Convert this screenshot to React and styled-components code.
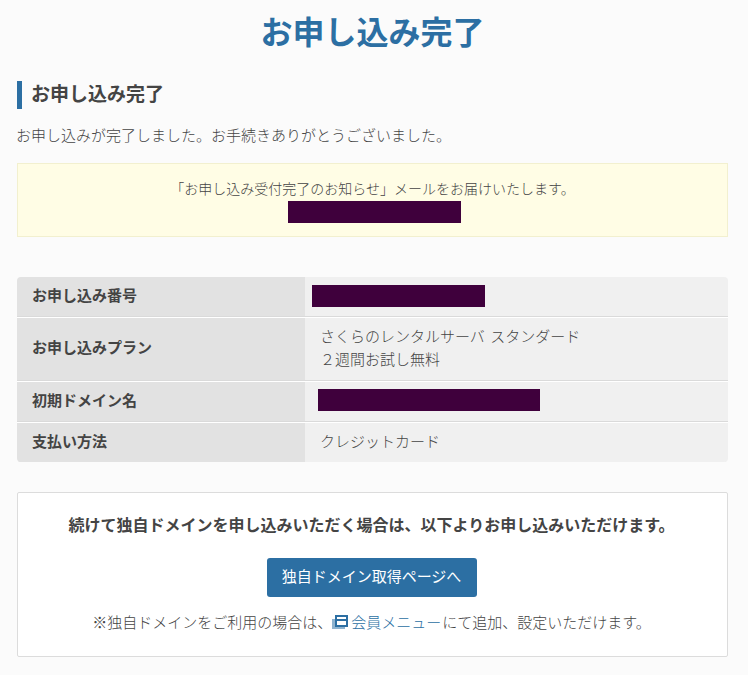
import styled, { createGlobalStyle } from "styled-components";

const GlobalStyle = createGlobalStyle`
  * {
    box-sizing: border-box;
  }
  body {
    margin: 0;
    background-color: #fbfbfb;
    color: #444;
    font-family: "Noto Sans CJK JP", sans-serif;
    font-size: 15px;
    font-weight: 300;
    line-height: 23px;
  }
  h1, h2, p, dl, dt, dd {
    margin: 0;
  }
`;

const StPage = styled.main`
  display: flex;
  flex-direction: column;
  width: 748px;
  height: 675px;
  padding: 6px 20px 0 17px;
  overflow: hidden;
`;

const StTitle = styled.h1`
  color: #2c6fa3;
  font-size: 32px;
  font-weight: bold;
  line-height: 48px;
  text-align: center;
`;

const StHeading = styled.h2`
  height: 28px;
  margin-top: 27px;
  padding-left: 9px;
  border-left: 5px solid #2c6fa3;
  color: #444;
  font-size: 19px;
  font-weight: bold;
  line-height: 24px;
`;

const StIntro = styled.p`
  margin: 14px 0 0 -1px;
`;

const StNotice = styled.section`
  display: flex;
  flex-direction: column;
  align-items: center;
  height: 74px;
  margin-top: 17px;
  padding-top: 13px;
  border: 1px solid #f2f0cf;
  background-color: #fffde5;
  font-size: 14px;
`;

const StNoticeText = styled.p`
  height: 24px;
`;

const StMask = styled.span`
  display: block;
  width: ${(props) => props.$width}px;
  height: 22px;
  margin-left: ${(props) => props.$shift ?? 0}px;
  background-color: #3f003c;
`;

const StTable = styled.dl`
  display: flex;
  flex-direction: column;
  margin-top: 40px;
  border-radius: 4px;
  overflow: hidden;
`;

const StRow = styled.div`
  display: grid;
  grid-template-columns: 288px 1fr;
  height: ${(props) => props.$height}px;
  & + & {
    border-top: 1px solid #fff;
  }
`;

const StLabel = styled.dt`
  display: flex;
  align-items: center;
  padding: 0 0 ${(props) => (props.$tall ? 6 : 4)}px 15px;
  border-bottom: 1px solid ${(props) => (props.$last ? "#e2e2e2" : "#dadada")};
  background-color: #e2e2e2;
  color: #444;
  font-weight: bold;
`;

const StValue = styled.dd`
  display: flex;
  align-items: ${(props) => (props.$maskTop ? "flex-start" : "center")};
  padding: ${(props) =>
    props.$maskTop ? `${props.$maskTop}px 0 0 15px` : "0 0 4px 15px"};
  border-bottom: 1px solid ${(props) => (props.$last ? "#f0f0f0" : "#dadada")};
  background-color: #f0f0f0;
  word-spacing: 2px;
`;

const StPanel = styled.section`
  display: flex;
  flex-direction: column;
  align-items: center;
  height: 165px;
  margin-top: 30px;
  padding: 19px 2px 0 0;
  border: 1px solid #dcdcdc;
  border-radius: 2px;
  background-color: #fff;
`;

const StLead = styled.p`
  color: #444;
  font-size: 16px;
  font-weight: bold;
  line-height: 24px;
`;

const StButton = styled.button`
  width: 210px;
  height: 39px;
  margin-top: 22px;
  padding: 0 0 4px;
  border: 0;
  border-radius: 3px;
  background-color: #2c6fa3;
  color: #fff;
  font: inherit;
  font-weight: 400;
  cursor: pointer;
`;

const StNote = styled.p`
  display: flex;
  align-items: center;
  margin-top: 13px;
`;

const StLink = styled.a`
  display: flex;
  align-items: center;
  gap: 3px;
  margin-right: 1px;
  color: #2c6fa3;
  text-decoration: none;
`;

const StIcon = styled.svg`
  width: 16px;
  height: 15px;
`;

const WindowIcon = () => (
  <StIcon viewBox="0 0 16 15" shapeRendering="crispEdges">
    <path d="M0 5h3v8h10v2H0z" fill="#8fb3cf" />
    <path d="M3 1h13v12H3zM5 3v2h9V3zM5 7v4h9V7z" fill="#2c6fa3" fillRule="evenodd" />
  </StIcon>
);

const rows = [
  { label: "お申し込み番号", height: 40, mask: { width: 173, shift: -8, top: 8 } },
  {
    label: "お申し込みプラン",
    height: 64,
    lines: ["さくらのレンタルサーバ スタンダード", "２週間お試し無料"],
  },
  { label: "初期ドメイン名", height: 41, mask: { width: 222, shift: -2, top: 7 } },
  { label: "支払い方法", height: 40, lines: ["クレジットカード"] },
];

const App = () => {
  return (
    <>
      <GlobalStyle />
      <StPage>
        <StTitle>お申し込み完了</StTitle>
        <StHeading>お申し込み完了</StHeading>
        <StIntro>お申し込みが完了しました。お手続きありがとうございました。</StIntro>
        <StNotice>
          <StNoticeText>
            「お申し込み受付完了のお知らせ」メールをお届けいたします。
          </StNoticeText>
          <StMask $width={173} $shift={4} />
        </StNotice>
        <StTable>
          {rows.map(({ label, height, mask, lines }, index) => {
            const last = index === rows.length - 1;
            return (
              <StRow key={label} $height={height}>
                <StLabel $last={last} $tall={lines?.length > 1}>
                  {label}
                </StLabel>
                <StValue $last={last} $maskTop={mask?.top}>
                  {mask && <StMask $width={mask.width} $shift={mask.shift} />}
                  {lines && (
                    <div>
                      {lines.map((line) => (
                        <p key={line}>{line}</p>
                      ))}
                    </div>
                  )}
                </StValue>
              </StRow>
            );
          })}
        </StTable>
        <StPanel>
          <StLead>
            続けて独自ドメインを申し込みいただく場合は、以下よりお申し込みいただけます。
          </StLead>
          <StButton>独自ドメイン取得ページへ</StButton>
          <StNote>
            ※独自ドメインをご利用の場合は、
            <StLink href="#">
              <WindowIcon />
              会員メニュー
            </StLink>
            にて追加、設定いただけます。
          </StNote>
        </StPanel>
      </StPage>
    </>
  );
};

export default App;
